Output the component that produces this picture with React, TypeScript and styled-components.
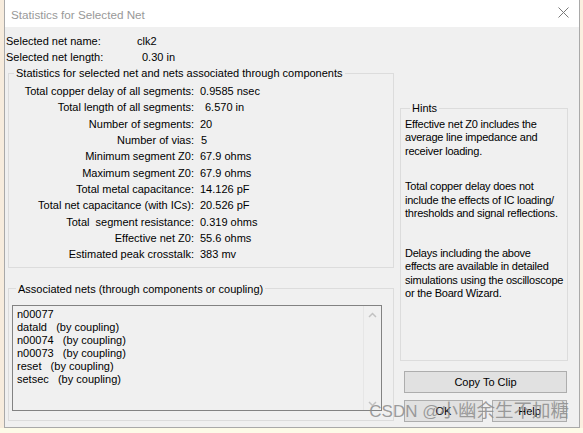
import React from 'react';
import styled, { createGlobalStyle } from 'styled-components';

const Global = createGlobalStyle`
  html, body { margin: 0; padding: 0; }
  body {
    background: #fbefe0;
    font-family: "Liberation Sans", Arial, sans-serif;
    font-size: 11px;
    color: #000;
  }
  #root { width: 583px; height: 433px; overflow: hidden; }
`;

const Screen = styled.div`
  width: 583px;
  height: 433px;
  display: flex;
  align-items: flex-start;
  background: linear-gradient(#fbefe0 0, #fbefe0 428px, #fdfbe8 428px);
`;

const LeftEdge = styled.div`
  width: 4px;
  height: 428px;
  background: #f7ecdd;
`;

const Dialog = styled.div`
  position: relative;
  width: 576px;
  height: 428px;
  box-sizing: border-box;
  border-left: 1px solid #a9a9a9;
  border-right: 1px solid #a9a9a9;
  border-bottom: 1px solid #a9a9a9;
  background: #f0f0f0;
  display: flex;
  flex-direction: column;
`;

const TitleBar = styled.div`
  height: 27px;
  flex: none;
  background: #fff;
  display: flex;
  align-items: center;
  justify-content: space-between;
  padding: 0 10px 0 6px;
`;

const Title = styled.span`
  font-size: 11.7px;
  color: #999;
  padding-top: 1px;
`;

const CloseIcon = styled.svg`
  width: 11px;
  height: 11px;
  margin-top: -3px;
`;

const Body = styled.div`
  flex: 1;
  padding: 6px 11px 0 1px;
  display: flex;
  flex-direction: column;
`;

const InfoRow = styled.div`
  display: grid;
  grid-template-columns: 131px auto;
  line-height: 16px;
  height: 16px;
  white-space: nowrap;
`;

const Shifted = styled.span<{ $shift?: number }>`
  padding-left: ${(p) => p.$shift ?? 0}px;
`;

const Main = styled.div`
  margin: 1px 0 0 2px;
  display: grid;
  grid-template-columns: 386px 168px;
  column-gap: 6px;
  align-items: start;
`;

const LeftCol = styled.div`
  display: flex;
  flex-direction: column;
  gap: 14px;
`;

const RightCol = styled.div`
  margin-top: 35px;
  display: flex;
  flex-direction: column;
`;

const Group = styled.fieldset<{ $pad: string; $h?: number }>`
  margin: 0;
  min-width: 0;
  border: 1px solid #dcdcdc;
  padding: ${(p) => p.$pad};
  box-sizing: border-box;
  ${(p) => (p.$h ? `height: ${p.$h}px;` : '')}
`;

const Legend = styled.legend<{ $left?: number }>`
  margin-left: ${(p) => p.$left ?? 5}px;
  padding: 0 2px;
  line-height: 14px;
  white-space: nowrap;
`;

const StatGrid = styled.div`
  display: grid;
  grid-template-columns: 185px auto;
  column-gap: 6px;
  grid-auto-rows: 16.33px;
  align-items: center;
  white-space: pre;
`;

const StatLabel = styled.span`
  text-align: right;
`;

const HintText = styled.p<{ $gap: number }>`
  margin: ${(p) => p.$gap}px 0 0 0;
  line-height: 13.33px;
  white-space: pre;
  letter-spacing: -0.22px;
`;

const ListBox = styled.div`
  width: 370px;
  height: 106px;
  box-sizing: border-box;
  border: 1px solid #828282;
  background: #f0f0f0;
  display: flex;
`;

const ListItems = styled.div`
  flex: 1;
  padding: 2px 0 0 4px;
  line-height: 13px;
  white-space: pre;
`;

const ScrollBar = styled.div`
  width: 17px;
  border-left: 1px solid #e6e6e6;
  display: flex;
  flex-direction: column;
  justify-content: space-between;
  align-items: center;
  padding: 6px 0 3px;
`;

const Chevron = styled.svg`
  width: 9px;
  height: 6px;
`;

const Button = styled.button<{ $w: number }>`
  width: ${(p) => p.$w}px;
  height: 22px;
  box-sizing: border-box;
  border: 1px solid #adadad;
  background: #e1e1e1;
  font-family: "Liberation Sans", Arial, sans-serif;
  font-size: 11px;
  color: #000;
  padding: 0;
`;

const ButtonStack = styled.div`
  margin: 10px 0 0 4px;
  display: flex;
  flex-direction: column;
  gap: 7px;
`;

const ButtonRow = styled.div`
  display: flex;
  gap: 9px;
`;

const Watermark = styled.div`
  position: absolute;
  right: 10px;
  bottom: 4px;
  color: rgba(140, 140, 140, 0.85);
  font-family: "Noto Sans CJK SC", "Liberation Sans", sans-serif;
  white-space: nowrap;
  pointer-events: none;
  line-height: 22px;
`;

const WmLatin = styled.span`
  font-family: "Liberation Sans", Arial, sans-serif;
  font-size: 17px;
`;

const WmCjk = styled.span`
  font-size: 18.5px;
`;

const stats: [string, string, number?][] = [
  ['Total copper delay of all segments:', '0.9585 nsec'],
  ['Total length of all segments:', '6.570 in', 5],
  ['Number of segments:', '20'],
  ['Number of vias:', '5', 1],
  ['Minimum segment Z0:', '67.9 ohms'],
  ['Maximum segment Z0:', '67.9 ohms'],
  ['Total metal capacitance:', '14.126 pF'],
  ['Total net capacitance (with ICs):', '20.526 pF'],
  ['Total  segment resistance:', '0.319 ohms'],
  ['Effective net Z0:', '55.6 ohms'],
  ['Estimated peak crosstalk:', '383 mv'],
];

const nets = [
  'n00077',
  'datald   (by coupling)',
  'n00074   (by coupling)',
  'n00073   (by coupling)',
  'reset   (by coupling)',
  'setsec   (by coupling)',
];

export default function App() {
  return (
    <>
      <Global />
      <Screen>
        <LeftEdge />
        <Dialog>
          <TitleBar>
            <Title>Statistics for Selected Net</Title>
            <CloseIcon viewBox="0 0 11 11">
              <path d="M0.5 0.5 L10.5 10.5 M10.5 0.5 L0.5 10.5" stroke="#7a7a7a" strokeWidth="1" fill="none" />
            </CloseIcon>
          </TitleBar>
          <Body>
            <InfoRow>
              <span>Selected net name:</span>
              <Shifted>clk2</Shifted>
            </InfoRow>
            <InfoRow>
              <span>Selected net length:</span>
              <Shifted $shift={5}>0.30 in</Shifted>
            </InfoRow>
            <Main>
              <LeftCol>
                <Group $pad="3px 0 4px 0">
                  <Legend>Statistics for selected net and nets associated through components</Legend>
                  <StatGrid>
                    {stats.map(([l, v, s]) => (
                      <React.Fragment key={l}>
                        <StatLabel>{l}</StatLabel>
                        <Shifted $shift={s}>{v}</Shifted>
                      </React.Fragment>
                    ))}
                  </StatGrid>
                </Group>
                <Group $pad="9px 0 9px 3px">
                  <Legend $left={4}>Associated nets (through components or coupling)</Legend>
                  <ListBox>
                    <ListItems>{nets.join('\n')}</ListItems>
                    <ScrollBar>
                      <Chevron viewBox="0 0 9 6">
                        <path d="M1 5 L4.5 1.5 L8 5" stroke="#c2c2c2" strokeWidth="1.5" fill="none" />
                      </Chevron>
                      <Chevron viewBox="0 0 9 6">
                        <path d="M1 1 L4.5 4.5 L8 1" stroke="#c2c2c2" strokeWidth="1.5" fill="none" />
                      </Chevron>
                    </ScrollBar>
                  </ListBox>
                </Group>
              </LeftCol>
              <RightCol>
                <Group $pad="3px 0 0 4px" $h={260}>
                  <Legend>Hints</Legend>
                  <HintText $gap={0}>{'Effective net Z0 includes the\naverage line impedance and\nreceiver loading.'}</HintText>
                  <HintText $gap={22.3}>{'Total copper delay does not\ninclude the effects of IC loading/\nthresholds and signal reflections.'}</HintText>
                  <HintText $gap={26.7}>{'Delays including the above\neffects are available in detailed\nsimulations using the oscilloscope\nor the Board Wizard.'}</HintText>
                </Group>
                <ButtonStack>
                  <Button $w={163}>Copy To Clip</Button>
                  <ButtonRow>
                    <Button $w={79}>OK</Button>
                    <Button $w={75}>Help</Button>
                  </ButtonRow>
                </ButtonStack>
              </RightCol>
            </Main>
          </Body>
          <Watermark>
            <WmLatin>CSDN @</WmLatin>
            <WmCjk>小幽余生不加糖</WmCjk>
          </Watermark>
        </Dialog>
      </Screen>
    </>
  );
}
